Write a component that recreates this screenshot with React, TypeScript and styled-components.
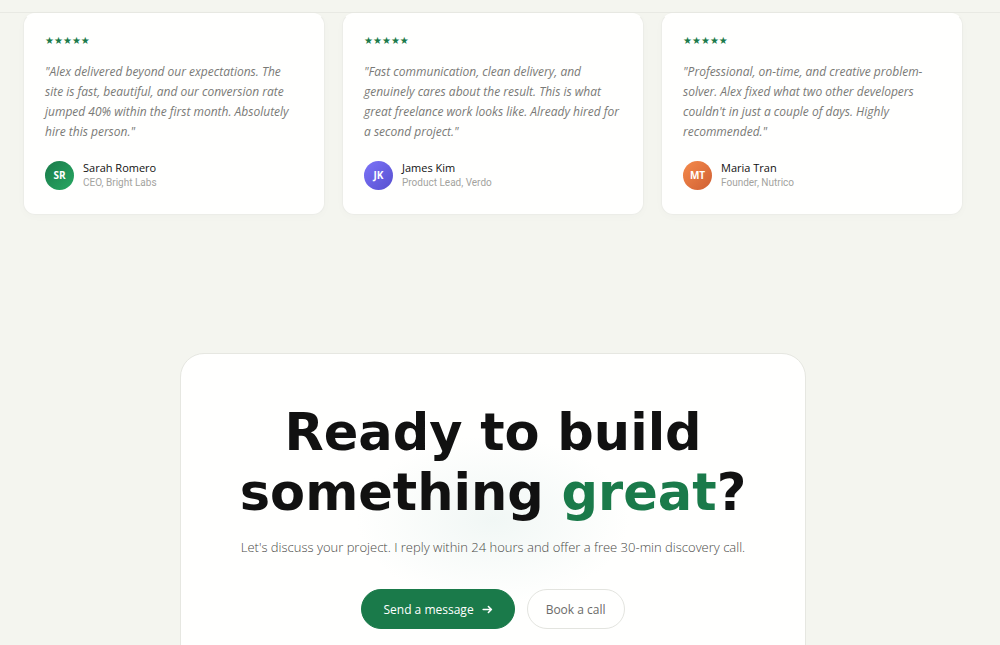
import React from "react";
import styled, { createGlobalStyle } from "styled-components";

const GlobalStyle = createGlobalStyle`
  *, *::before, *::after { box-sizing: border-box; }
  html { background: #f4f5ef; scrollbar-width: none; }
  body {
    margin: 0;
    background: #f4f5ef;
    color: #111111;
    font-family: "Open Sans", "Liberation Sans", sans-serif;
    font-size: 12px;
  }
`;

const Header = styled.header`
  height: 13px;
  border-bottom: 1px solid #e8e9e3;
`;

const Main = styled.main`
  padding: 0 37px 64px 23px;
`;

const Testimonials = styled.section`
  display: grid;
  grid-template-columns: repeat(3, 1fr);
  gap: 17px;
`;

const Card = styled.article`
  display: flex;
  flex-direction: column;
  padding: 20px 23px 24px 21px;
  background: #fffffe;
  border: 1px solid #ecede8;
  border-top-color: #fffffe;
  border-radius: 12px;
  box-shadow: 0 2px 8px rgba(0, 0, 0, 0.02);
`;

const Stars = styled.div`
  color: #1a7a4a;
  font-family: "DejaVu Sans", sans-serif;
  font-size: 10px;
  line-height: 14px;
`;

const Quote = styled.blockquote`
  margin: 14px 0 18px;
  color: #7a7a77;
  font-size: 12px;
  font-style: italic;
  font-weight: 400;
  line-height: 20px;
`;

const Author = styled.div`
  display: flex;
  align-items: center;
  gap: 9px;
`;

const Avatar = styled.div<{ $from: string; $to: string }>`
  display: grid;
  place-items: center;
  width: 29px;
  height: 29px;
  border-radius: 50%;
  background: linear-gradient(135deg, ${(p) => p.$from}, ${(p) => p.$to});
  color: #ffffff;
  font-size: 10px;
  font-weight: 700;
`;

const Name = styled.div`
  font-size: 11px;
  font-weight: 500;
  line-height: 16px;
`;

const Role = styled.div`
  color: #a3a39e;
  font-family: "Roboto", "Liberation Sans", sans-serif;
  font-size: 10px;
  line-height: 14px;
`;

const CallToAction = styled.section`
  max-width: 626px;
  margin: 138px auto 0;
  padding: 49px 40px 56px;
  border: 1px solid #e6e7e1;
  border-radius: 24px;
  background: radial-gradient(136px 84px at center, #f1f7f5, #fffffe);
  text-align: center;
`;

const Title = styled.h2`
  margin: 0;
  font-family: "DejaVu Sans", sans-serif;
  font-size: 51px;
  font-weight: 700;
  line-height: 60px;
`;

const Highlight = styled.span`
  color: #1a7a4a;
`;

const Lead = styled.p`
  margin: 14px 0 32px;
  color: #4a4a47;
  font-size: 13px;
  font-weight: 300;
  line-height: 20px;
`;

const Actions = styled.div`
  display: flex;
  justify-content: center;
  gap: 12px;
`;

const Button = styled.button<{ $primary?: boolean }>`
  display: inline-flex;
  align-items: center;
  gap: 8px;
  height: 40px;
  padding: 0 ${(p) => (p.$primary ? 21 : 18)}px;
  border: 1px solid ${(p) => (p.$primary ? "#1a7a4a" : "#e3e4df")};
  border-radius: 20px;
  background: ${(p) => (p.$primary ? "#1a7a4a" : "#fffffe")};
  color: ${(p) => (p.$primary ? "#ffffff" : "#6b6b68")};
  font-family: inherit;
  font-size: 12px;
  font-weight: ${(p) => (p.$primary ? 500 : 400)};
  cursor: pointer;
`;

const testimonials = [
  {
    quote:
      "Alex delivered beyond our expectations. The site is fast, beautiful, and our conversion rate jumped 40% within the first month. Absolutely hire this person.",
    initials: "SR",
    name: "Sarah Romero",
    role: "CEO, Bright Labs",
    from: "#1a7a4a",
    to: "#27a862",
  },
  {
    quote:
      "Fast communication, clean delivery, and genuinely cares about the result. This is what great freelance work looks like. Already hired for a second project.",
    initials: "JK",
    name: "James Kim",
    role: "Product Lead, Verdo",
    from: "#7c74f8",
    to: "#574fcf",
  },
  {
    quote:
      "Professional, on-time, and creative problem-solver. Alex fixed what two other developers couldn't in just a couple of days. Highly recommended.",
    initials: "MT",
    name: "Maria Tran",
    role: "Founder, Nutrico",
    from: "#f58a4b",
    to: "#cf5f33",
  },
];

const Arrow = () => (
  <svg width="11" height="11" viewBox="0 0 11 11" fill="none" stroke="currentColor" strokeWidth="1.6" strokeLinecap="round" strokeLinejoin="round" aria-hidden="true">
    <path d="M1.2 5.5h8.2M6.4 2.5l3 3-3 3" />
  </svg>
);

export default function App() {
  return (
    <>
      <GlobalStyle />
      <Header />
      <Main>
        <Testimonials>
          {testimonials.map((t) => (
            <Card key={t.name}>
              <Stars>★★★★★</Stars>
              <Quote>{`"${t.quote}"`}</Quote>
              <Author>
                <Avatar $from={t.from} $to={t.to}>{t.initials}</Avatar>
                <div>
                  <Name>{t.name}</Name>
                  <Role>{t.role}</Role>
                </div>
              </Author>
            </Card>
          ))}
        </Testimonials>
        <CallToAction>
          <Title>
            Ready to build
            <br />
            something <Highlight>great</Highlight>?
          </Title>
          <Lead>Let's discuss your project. I reply within 24 hours and offer a free 30-min discovery call.</Lead>
          <Actions>
            <Button type="button" $primary>
              Send a message <Arrow />
            </Button>
            <Button type="button">Book a call</Button>
          </Actions>
        </CallToAction>
      </Main>
    </>
  );
}
